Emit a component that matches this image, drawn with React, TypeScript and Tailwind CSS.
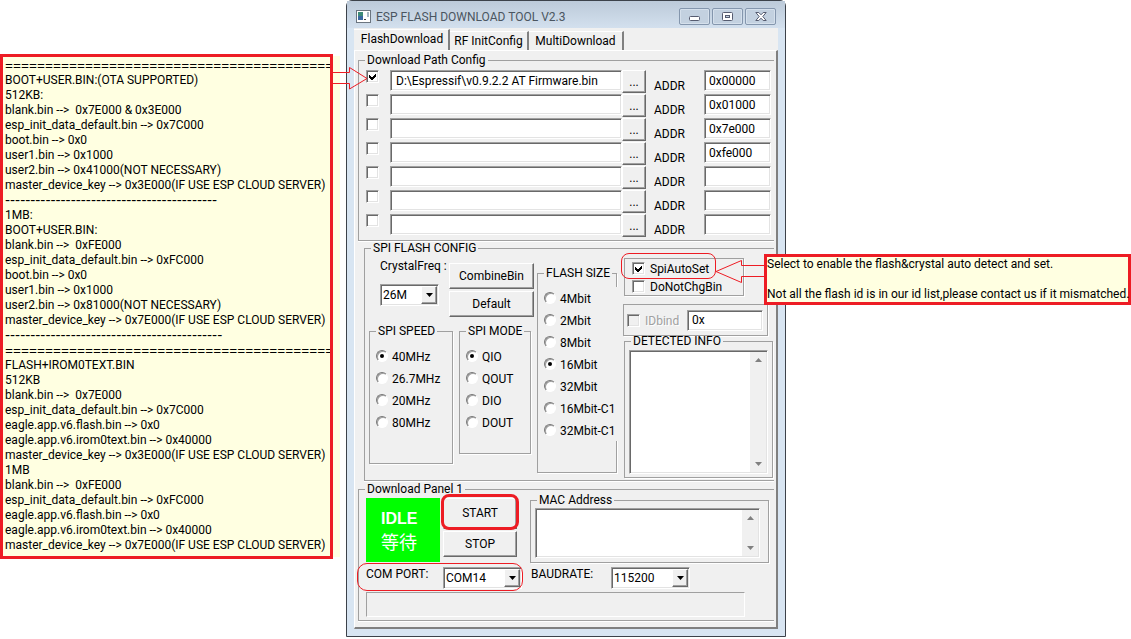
import React from "react";

const sunken =
  "border border-t-[#a0a0a0] border-l-[#a0a0a0] border-r-white border-b-white shadow-[inset_1px_1px_0_#696969,inset_-1px_-1px_0_#e3e3e3]";
const raised =
  "border border-t-white border-l-white border-r-[#696969] border-b-[#696969] bg-[#f0f0f0] shadow-[inset_-1px_-1px_0_#a0a0a0]";
const groove = "border border-[#a0a0a0] shadow-[1px_1px_0_#fff]";

const bootNotes = [
  "BOOT+USER.BIN:(OTA SUPPORTED)",
  "512KB:",
  "blank.bin -->  0x7E000 & 0x3E000",
  "esp_init_data_default.bin --> 0x7C000",
  "boot.bin --> 0x0",
  "user1.bin --> 0x1000",
  "user2.bin --> 0x41000(NOT NECESSARY)",
  "master_device_key --> 0x3E000(IF USE ESP CLOUD SERVER)",
];

const bootNotes1M = [
  "1MB:",
  "BOOT+USER.BIN:",
  "blank.bin -->  0xFE000",
  "esp_init_data_default.bin --> 0xFC000",
  "boot.bin --> 0x0",
  "user1.bin --> 0x1000",
  "user2.bin --> 0x81000(NOT NECESSARY)",
  "master_device_key --> 0x7E000(IF USE ESP CLOUD SERVER)",
];

const flashNotes = [
  "FLASH+IROM0TEXT.BIN",
  "512KB",
  "blank.bin -->  0x7E000",
  "esp_init_data_default.bin --> 0x7C000",
  "eagle.app.v6.flash.bin --> 0x0",
  "eagle.app.v6.irom0text.bin --> 0x40000",
  "master_device_key --> 0x3E000(IF USE ESP CLOUD SERVER)",
  "1MB",
  "blank.bin -->  0xFE000",
  "esp_init_data_default.bin --> 0xFC000",
  "eagle.app.v6.flash.bin --> 0x0",
  "eagle.app.v6.irom0text.bin --> 0x40000",
  "master_device_key --> 0x7E000(IF USE ESP CLOUD SERVER)",
];

const files = [
  { path: "D:\\Espressif\\v0.9.2.2 AT Firmware.bin", addr: "0x00000", on: true },
  { path: "", addr: "0x01000", on: false },
  { path: "", addr: "0x7e000", on: false },
  { path: "", addr: "0xfe000", on: false },
  { path: "", addr: "", on: false },
  { path: "", addr: "", on: false },
  { path: "", addr: "", on: false },
];

const NoteLines = ({ lines }: { lines: string[] }) => (
  <>
    {lines.map((line, index) => (
      <p key={index} className="whitespace-pre">
        {line}
      </p>
    ))}
  </>
);

const DoubleRule = () => (
  <p className="font-['Noto_Sans',sans-serif] text-[14px] leading-[15px]">
    {"=".repeat(41)}
  </p>
);

const DashRule = ({ count }: { count: number }) => (
  <p className="font-['DejaVu_Sans',sans-serif] text-[14px] leading-[15px]">
    {"-".repeat(count)}
  </p>
);

const Check = ({
  label,
  name,
  on,
  disabled,
}: {
  label?: string;
  name: string;
  on?: boolean;
  disabled?: boolean;
}) => (
  <label className="flex items-center gap-[5px]">
    <span className="relative block h-[13px] w-[13px] shrink-0">
      <input
        type="checkbox"
        aria-label={name}
        defaultChecked={on}
        disabled={disabled}
        className={`peer block h-[13px] w-[13px] appearance-none bg-white disabled:bg-[#f0f0f0] ${sunken}`}
      />
      <svg
        viewBox="0 0 13 13"
        className="pointer-events-none absolute inset-0 hidden h-[13px] w-[13px] peer-checked:block"
        shapeRendering="crispEdges"
      >
        <path d="M3 5v3l2 2h1l4-4V3L6 7H5z" fill="#000" />
      </svg>
    </span>
    {label && (
      <span
        className={disabled ? "pt-0.5 text-[#a0a0a0] [text-shadow:1px_1px_0_#fff]" : "pt-0.5"}
      >
        {label}
      </span>
    )}
  </label>
);

const Radio = ({ label, group, on }: { label: string; group: string; on?: boolean }) => (
  <label className="flex h-[22px] items-center gap-1 whitespace-nowrap bg-[#f0f0f0]">
    <span className="relative block h-3 w-3 shrink-0">
      <input
        type="radio"
        name={group}
        defaultChecked={on}
        className="peer block h-3 w-3 appearance-none rounded-full border border-t-[#777] border-l-[#777] border-r-white border-b-white bg-white shadow-[inset_1px_1px_0_#a0a0a0]"
      />
      <span className="pointer-events-none absolute top-1 left-1 hidden h-1 w-1 rounded-full bg-black peer-checked:block" />
    </span>
    <span className="pt-0.5">{label}</span>
  </label>
);

const Legend = ({
  children,
  className = "",
}: {
  children: React.ReactNode;
  className?: string;
}) => (
  <legend className={`px-0.5 leading-[14px] whitespace-nowrap ${className}`}>{children}</legend>
);

const RadioGroup = ({
  title,
  group,
  options,
  selected,
  className,
}: {
  title: string;
  group: string;
  options: string[];
  selected: string;
  className: string;
}) => (
  <fieldset className={`min-w-0 pt-[7px] pl-1.5 ${groove} ${className}`}>
    <Legend>{title}</Legend>
    {options.map((option) => (
      <Radio key={option} label={option} group={group} on={option === selected} />
    ))}
  </fieldset>
);

const Combo = ({
  id,
  value,
  className,
}: {
  id: string;
  value: string;
  className: string;
}) => (
  <div className={`relative h-[22px] ${className}`}>
    <select
      id={id}
      defaultValue={value}
      className={`h-full w-full appearance-none bg-white pl-0.5 ${sunken}`}
    >
      <option>{value}</option>
    </select>
    <span
      className={`pointer-events-none absolute top-0.5 right-0.5 bottom-0.5 flex w-4 items-center justify-center ${raised}`}
    >
      <svg viewBox="0 0 7 4" className="h-1 w-[7px]">
        <path d="M0 0h7L3.5 4z" fill="#000" />
      </svg>
    </span>
  </div>
);

const ScrollBox = ({ name, className }: { name: string; className: string }) => (
  <div className={`flex bg-white p-px ${sunken} ${className}`}>
    <textarea aria-label={name} className="min-w-0 flex-1 resize-none outline-none" />
    <div className="flex w-4 flex-col items-center justify-between bg-[#f0f0f0] py-1.5">
      <svg viewBox="0 0 7 4" className="h-1 w-[7px]">
        <path d="M0 4h7L3.5 0z" fill="#808080" />
      </svg>
      <svg viewBox="0 0 7 4" className="h-1 w-[7px]">
        <path d="M0 0h7L3.5 4z" fill="#808080" />
      </svg>
    </div>
  </div>
);

const captionButton =
  "flex h-[17px] w-[31px] items-center justify-center rounded-[2px] border border-[#8496ad] bg-[#c3d1e0] shadow-[inset_0_0_0_1px_#d5e0ec]";

const TitleBar = () => (
  <div className="flex h-[27px] items-center bg-linear-to-b from-[#bccad9] to-[#d3e0ee] pt-1 pr-[9px] pl-[9px]">
    <svg viewBox="0 0 15 13" className="mr-[5px] h-[13px] w-[15px]">
      <rect x=".5" y=".5" width="14" height="12" fill="#fff" stroke="#6b7580" />
      <rect x="2" y="2" width="5" height="8" fill="#3c8a78" />
      <rect x="2" y="6" width="5" height="4" fill="#3a68a0" />
      <rect x="8" y="9" width="2" height="1" fill="#444" />
      <rect x="11" y="2" width="2" height="5" fill="#a8b8c4" />
    </svg>
    <h1 className="flex-1 text-[#4a5560]">ESP FLASH DOWNLOAD TOOL V2.3</h1>
    <div className="flex gap-0.5">
      <button aria-label="Minimize" className={captionButton}>
        <svg viewBox="0 0 11 11" className="h-[11px] w-[11px]">
          <rect x=".5" y="5.5" width="10" height="4" rx="1" fill="#fff" stroke="#565c70" />
        </svg>
      </button>
      <button aria-label="Maximize" className={captionButton}>
        <svg viewBox="0 0 11 11" className="h-[11px] w-[11px]">
          <rect x=".5" y="1.5" width="10" height="8" rx="1" fill="#fff" stroke="#565c70" />
          <rect x="3.5" y="4.5" width="4" height="2" fill="#c3d1e0" stroke="#565c70" />
        </svg>
      </button>
      <button aria-label="Close" className={captionButton}>
        <svg viewBox="0 0 12 11" className="h-[11px] w-3">
          <path
            d="M.8 1.5h3L6 3.8l2.200-2.300h3L7.800 5.500l3.400 4h-3L6 7.200 3.800 9.500h-3l3.400-4z"
            fill="#fff"
            stroke="#565c70"
          />
        </svg>
      </button>
    </div>
  </div>
);

const tab = "border-t border-r-2 border-t-white border-r-[#808080]";

const Tabs = () => (
  <div className="flex h-[22px] items-end pt-px">
    <button className={`h-[21px] w-24 pb-0.5 pl-0.5 ${tab}`}>FlashDownload</button>
    <button className={`h-[19px] w-[79px] ${tab}`}>RF InitConfig</button>
    <button className={`h-[19px] w-[95px] ${tab}`}>MultiDownload</button>
  </div>
);

const PathConfig = () => (
  <fieldset className="min-w-0 border border-r-0 border-[#a0a0a0] pt-[3px] pr-[3px] pb-0.5 pl-[7px] shadow-[0_1px_0_#fff]">
    <Legend className="-ml-px">Download Path Config</Legend>
    {files.map((file, index) => (
      <div key={index} className="flex h-6 items-start">
        <Check name={`Use file ${index + 1}`} on={file.on} />
        <input
          type="text"
          aria-label={`File ${index + 1}`}
          defaultValue={file.path}
          className={`ml-[11px] h-[21px] min-w-0 flex-1 bg-white px-[5px] ${sunken}`}
        />
        <button className={`h-[23px] w-6 ${raised}`}>...</button>
        <label htmlFor={`addr${index}`} className="w-[58px] pt-2 pl-2 leading-4">
          ADDR
        </label>
        <input
          id={`addr${index}`}
          type="text"
          defaultValue={file.addr}
          className={`h-[21px] w-[67px] bg-white px-1 ${sunken}`}
        />
      </div>
    ))}
  </fieldset>
);

const SpiConfig = () => (
  <fieldset className="ml-1.5 min-w-0 border border-r-0 border-[#a0a0a0] pb-[2px] pl-1 shadow-[0_1px_0_#fff]">
    <Legend className="ml-0.5">SPI FLASH CONFIG</Legend>
    <div className="flex pr-px">
      <div className="w-[165px] pt-[3px]">
        <div className="flex justify-between">
          <div className="ml-[11px] w-[59px]">
            <label htmlFor="crystal" className="block leading-4 whitespace-nowrap">
              CrystalFreq :
            </label>
            <Combo id="crystal" value="26M" className="mt-2.5" />
          </div>
          <div className="flex w-[85px] flex-col gap-0.5 pt-[5px]">
            <button className={`h-[26px] ${raised}`}>CombineBin</button>
            <button className={`h-[26px] ${raised}`}>Default</button>
          </div>
        </div>
        <div className="flex items-start gap-1.5 pt-[7px]">
          <RadioGroup
            title="SPI SPEED"
            group="speed"
            options={["40MHz", "26.7MHz", "20MHz", "80MHz"]}
            selected="40MHz"
            className="h-[140px] w-[84px]"
          />
          <RadioGroup
            title="SPI MODE"
            group="mode"
            options={["QIO", "QOUT", "DIO", "DOUT"]}
            selected="QIO"
            className="h-[130px] w-[72px]"
          />
        </div>
      </div>
      <RadioGroup
        title="FLASH SIZE"
        group="size"
        options={["4Mbit", "2Mbit", "8Mbit", "16Mbit", "32Mbit", "16Mbit-C1", "32Mbit-C1"]}
        selected="16Mbit"
        className="mt-[11px] mr-1.5 ml-[3px] h-[207px] w-20 [&>label]:-mr-0.5"
      />
      <div className="min-w-0 flex-1 pt-[3px]">
        <div className={`relative ml-px w-[120px] pl-[7px] ${groove}`}>
          <div className="flex h-[18px] items-center">
            <Check name="SpiAutoSet" label="SpiAutoSet" on />
          </div>
          <div className="flex h-[18px] items-center">
            <Check name="DoNotChgBin" label="DoNotChgBin" />
          </div>
          <span className="pointer-events-none absolute -top-1.5 -left-1 h-[26px] w-[95px] rounded-lg border border-[#ed1c24]" />
        </div>
        <div className={`mt-2 flex h-8 w-[145px] items-center pr-1 pl-[3px] ${groove}`}>
          <Check name="IDbind" label="IDbind" disabled />
          <input
            type="text"
            aria-label="ID"
            defaultValue="0x"
            className={`ml-auto h-[21px] w-[76px] bg-white px-1 ${sunken}`}
          />
        </div>
        <fieldset className={`-mt-0.5 ml-px min-w-0 px-1 pt-0.5 pb-[3px] ${groove}`}>
          <Legend className="ml-0.5">DETECTED INFO</Legend>
          <ScrollBox name="Detected info" className="h-[124px]" />
        </fieldset>
      </div>
    </div>
  </fieldset>
);

const DownloadPanel = () => (
  <fieldset className="mt-px min-w-0 border border-r-0 border-[#a0a0a0] pr-[5px] pb-[3px] pl-[7px] shadow-[0_1px_0_#fff]">
    <Legend className="-ml-px">Download Panel 1</Legend>
    <div className="flex items-start">
      <div className="mt-0.5 flex h-16 w-[74px] flex-col justify-center bg-[#00ff00] pl-[15px] text-white">
        <span className="font-['Liberation_Sans',sans-serif] text-[16px] leading-[22px] font-bold">
          IDLE
        </span>
        <span className="font-['Noto_Sans_CJK_SC',sans-serif] text-[18px] leading-[22px]">
          等待
        </span>
      </div>
      <div className="ml-[3px] flex w-[74px] flex-col gap-0.5">
        <div className="relative pt-0.5">
          <button className={`block h-[31px] w-full pb-0.5 ${raised}`}>START</button>
          <span className="pointer-events-none absolute -inset-x-0.5 -top-0.5 -bottom-px rounded-lg border-3 border-[#ed1c24]" />
        </div>
        <button className={`h-[26px] ${raised}`}>STOP</button>
      </div>
      <fieldset className={`-mt-[3px] ml-[13px] min-w-0 flex-1 pt-px pr-2 pb-1 pl-1 ${groove}`}>
        <Legend className="ml-0.5">MAC Address</Legend>
        <ScrollBox name="MAC address" className="h-[50px]" />
      </fieldset>
    </div>
    <div className="relative flex items-start pt-1">
      <label htmlFor="com" className="w-[77px] leading-[14px]">
        COM PORT:
      </label>
      <Combo id="com" value="COM14" className="w-[79px]" />
      <label htmlFor="baud" className="ml-[9px] w-20 leading-[14px]">
        BAUDRATE:
      </label>
      <Combo id="baud" value="115200" className="w-[79px]" />
      <span className="pointer-events-none absolute top-0 -left-[9px] h-7 w-[166px] rounded-[10px] border border-[#ed1c24]" />
    </div>
    <div
      role="progressbar"
      aria-label="Download progress"
      className="mt-[3px] mr-6 h-[25px] border border-t-[#a0a0a0] border-l-[#a0a0a0] border-r-white border-b-white"
    />
  </fieldset>
);

const FlashNote = () => (
  <aside className="relative z-10 mt-[54px] border-3 border-[#ed1c24] bg-[#ffffe1] pt-px pb-[3px] pl-0.5 leading-[15px] shadow-[9px_0_0_-2px_#ffffe1]">
    <div className="overflow-hidden">
      <DoubleRule />
      <NoteLines lines={bootNotes} />
      <DashRule count={42} />
      <NoteLines lines={bootNotes1M} />
      <DashRule count={43} />
      <DoubleRule />
      <NoteLines lines={flashNotes} />
    </div>
    <svg
      viewBox="0 0 35 23"
      className="absolute top-[10px] left-full ml-[3px] h-[23px] w-[35px]"
      fill="none"
      stroke="#ed1c24"
    >
      <path d="M0 5.500h16.500V.5L34 11.500l-17.500 10.500v-5.500H0" />
    </svg>
  </aside>
);

const AutoSetNote = () => (
  <aside className="relative z-10 mt-[254px] -ml-[9px] border-3 border-[#ed1c24] bg-[#ffffe1] leading-[15px] whitespace-nowrap">
    <p>Select to enable the flash&amp;crystal auto detect and set.</p>
    <p className="pt-[15px]">
      Not all the flash id is in our id list,please contact us if it mismatched.
    </p>
    <svg
      viewBox="0 0 49 24"
      className="absolute top-[3px] right-full mr-[3px] h-6 w-[49px]"
      fill="none"
      stroke="#ed1c24"
    >
      <path d="M49 5.500H26.500V.5L1 11.500l25.500 11v-6H49" />
    </svg>
  </aside>
);

const App = () => {
  return (
    <main className="grid min-h-screen grid-cols-[minmax(0,333fr)_minmax(0,440fr)_minmax(0,358fr)] items-start bg-white font-['Roboto','Noto_Sans',sans-serif] text-[12px] text-black">
      <FlashNote />
      <section className="ml-[13px] -mr-[13px] rounded-t-md border border-[#3c424a] bg-[#d8e5f2]">
        <TitleBar />
        <div className="mx-[7px] mb-[7px] bg-[#f0f0f0]">
          <Tabs />
          <div className="border-t border-r-2 border-b-2 border-l border-t-white border-r-[#808080] border-b-[#808080] border-l-white pt-0.5 pr-0.5 pb-1.5 pl-[3px]">
            <PathConfig />
            <SpiConfig />
            <DownloadPanel />
          </div>
        </div>
      </section>
      <AutoSetNote />
    </main>
  );
};

export default App;
